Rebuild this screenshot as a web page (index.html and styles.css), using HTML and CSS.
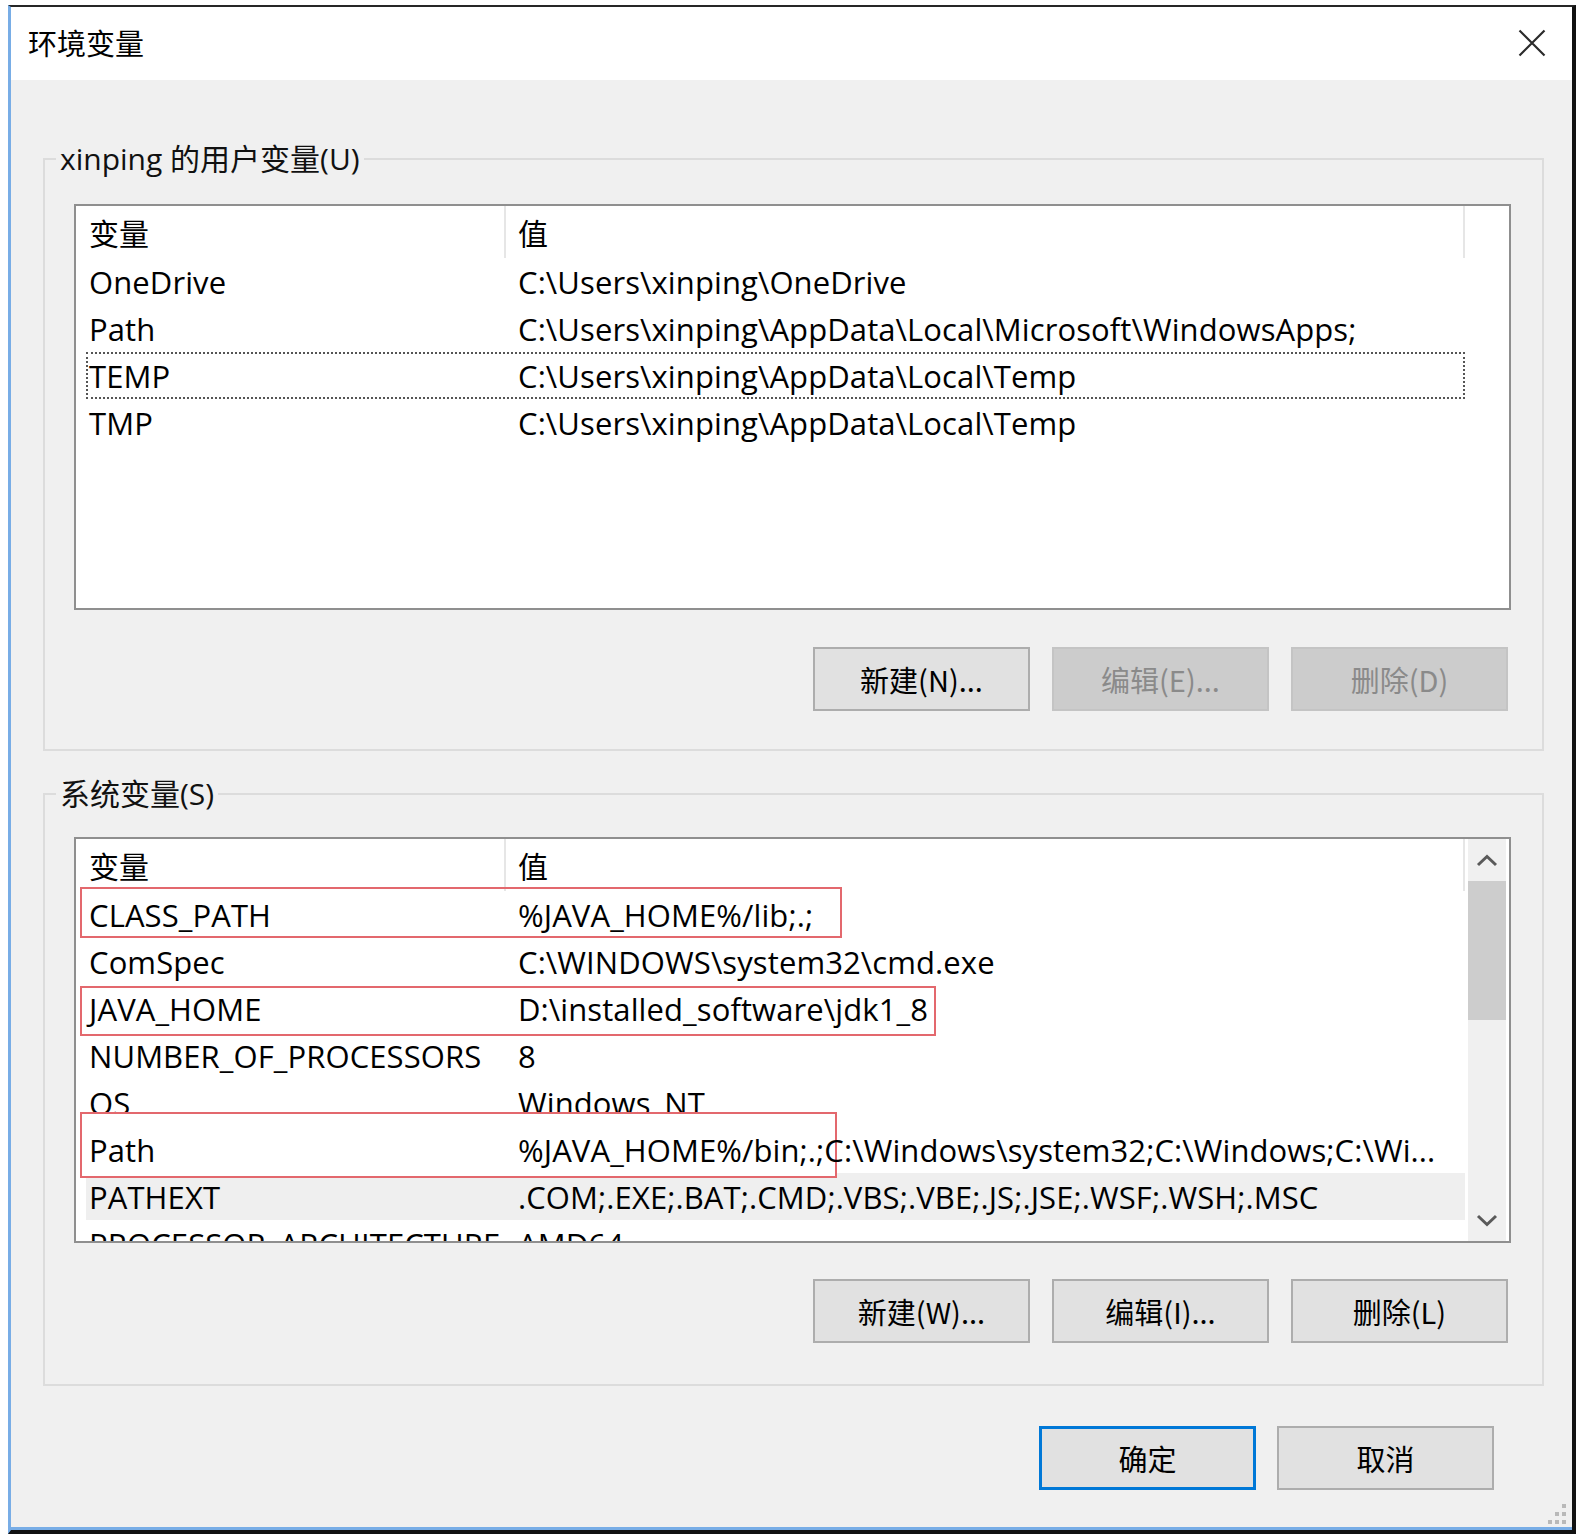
FILE: index.html
```html
<!DOCTYPE html>
<html lang="zh-CN">
<head>
  <meta charset="UTF-8" />
  <title>环境变量</title>
  <link rel="stylesheet" href="styles.css">
</head>
<body>
  <div class="window">
    <div class="titlebar">
      <span class="title">环境变量</span>
      <span class="close">
        <svg width="28" height="28" viewBox="0 0 28 28">
          <path d="M1.5 1.5 L26.5 26.5 M26.5 1.5 L1.5 26.5" stroke="#2b2b2b" stroke-width="2.2" fill="none"/>
        </svg>
      </span>
    </div>

    <div class="client">
      <!-- user variables -->
      <fieldset class="group group-user">
        <legend>xinping 的用户变量(U)</legend>
        <div class="list">
          <div class="list-body">
            <div class="list-head">
              <span class="col-name">变量</span>
              <span class="col-value">值</span>
            </div>
            <div class="row"><span class="col-name">OneDrive</span><span class="col-value">C:\Users\xinping\OneDrive</span></div>
            <div class="row"><span class="col-name">Path</span><span class="col-value">C:\Users\xinping\AppData\Local\Microsoft\WindowsApps;</span></div>
            <div class="row focused"><span class="col-name">TEMP</span><span class="col-value">C:\Users\xinping\AppData\Local\Temp</span></div>
            <div class="row"><span class="col-name">TMP</span><span class="col-value">C:\Users\xinping\AppData\Local\Temp</span></div>
          </div>
        </div>
        <div class="buttons">
          <button class="btn">新建(N)...</button>
          <button class="btn" disabled>编辑(E)...</button>
          <button class="btn" disabled>删除(D)</button>
        </div>
      </fieldset>

      <!-- system variables -->
      <fieldset class="group group-system">
        <legend>系统变量(S)</legend>
        <div class="list">
          <div class="list-body">
            <div class="list-head">
              <span class="col-name">变量</span>
              <span class="col-value">值</span>
            </div>
            <div class="row"><span class="mark mark-class"></span><span class="col-name">CLASS_PATH</span><span class="col-value">%JAVA_HOME%/lib;.;</span></div>
            <div class="row"><span class="col-name">ComSpec</span><span class="col-value">C:\WINDOWS\system32\cmd.exe</span></div>
            <div class="row"><span class="mark mark-java"></span><span class="col-name">JAVA_HOME</span><span class="col-value">D:\installed_software\jdk1_8</span></div>
            <div class="row"><span class="col-name">NUMBER_OF_PROCESSORS</span><span class="col-value">8</span></div>
            <div class="row"><span class="col-name">OS</span><span class="col-value">Windows_NT</span></div>
            <div class="row row-path"><span class="mark mark-path"></span><span class="col-name">Path</span><span class="col-value">%JAVA_HOME%/bin;.;C:\Windows\system32;C:\Windows;C:\Wi...</span></div>
            <div class="row selected"><span class="col-name">PATHEXT</span><span class="col-value">.COM;.EXE;.BAT;.CMD;.VBS;.VBE;.JS;.JSE;.WSF;.WSH;.MSC</span></div>
            <div class="row"><span class="col-name">PROCESSOR_ARCHITECTURE</span><span class="col-value">AMD64</span></div>
          </div>
          <div class="scrollbar">
            <span class="scroll-arrow">
              <svg width="22" height="13" viewBox="0 0 22 13"><polyline points="2,11 11,2.5 20,11" stroke="#5a5a5a" stroke-width="3" fill="none"/></svg>
            </span>
            <span class="scroll-thumb"></span>
            <span class="scroll-space"></span>
            <span class="scroll-arrow">
              <svg width="22" height="13" viewBox="0 0 22 13"><polyline points="2,2 11,10.5 20,2" stroke="#5a5a5a" stroke-width="3" fill="none"/></svg>
            </span>
          </div>
        </div>
        <div class="buttons">
          <button class="btn">新建(W)...</button>
          <button class="btn">编辑(I)...</button>
          <button class="btn">删除(L)</button>
        </div>
      </fieldset>

      <div class="dialog-buttons">
        <button class="btn btn-default">确定</button>
        <button class="btn">取消</button>
      </div>
    </div>

    <svg class="grip" width="24" height="24" viewBox="0 0 24 24">
      <rect x="18" y="2" width="4" height="4" fill="#b9b9b9"/>
      <rect x="11" y="10" width="4" height="4" fill="#b9b9b9"/>
      <rect x="18" y="10" width="4" height="4" fill="#b9b9b9"/>
      <rect x="4" y="18" width="4" height="4" fill="#b9b9b9"/>
      <rect x="11" y="18" width="4" height="4" fill="#b9b9b9"/>
      <rect x="18" y="18" width="4" height="4" fill="#b9b9b9"/>
    </svg>
  </div>
</body>
</html>
```

FILE: styles.css
```css
body {
  margin: 0;
  padding: 0;
  background: #fff;
  font-family: "Open Sans", "Noto Sans CJK SC", sans-serif;
  color: #000;
}

.window {
  position: relative;
  box-sizing: border-box;
  width: 1568px;
  height: 1529px;
  margin: 5px 0 0 8px;
  background: #f0f0f0;
  border-top: 2px solid #262626;
  border-left: 3px solid #78ade6;
  border-right: 4px solid #111;
  border-bottom: 4px solid #111;
  box-shadow: inset 0 -3px 0 #78ade6;
  display: flex;
  flex-direction: column;
}

.titlebar {
  height: 73px;
  background: #fff;
  display: flex;
  align-items: center;
  justify-content: space-between;
  padding: 0 26px 0 17px;
}

.title {
  font-family: "Noto Sans CJK SC", sans-serif;
  font-size: 29px;
  line-height: 40px;
  margin-top: -3px;
}

.close {
  display: flex;
  margin-top: -1px;
}

.client {
  flex: 1;
}

.group {
  margin: 59px 28px 0 32px;
  padding: 25px 31px 38px 29px;
  border: 2px solid #dcdcdc;
  min-width: 0;
}

.group-system {
  margin-top: 23px;
  padding-top: 23px;
  padding-bottom: 41px;
}

.group legend {
  margin-left: -18px;
  padding: 0 4px;
  font-size: 30px;
  line-height: 40px;
  color: #111;
}

.list {
  box-sizing: border-box;
  height: 406px;
  background: #fff;
  border: 2px solid #8f8f8f;
  display: flex;
  overflow: hidden;
  font-size: 31px;
  letter-spacing: 0.1px;
}

.list-body {
  box-sizing: border-box;
  width: 1389px;
  flex: none;
  padding-left: 10px;
  white-space: nowrap;
}

.list-head,
.row {
  display: flex;
  align-items: center;
}

.list-head {
  height: 52px;
  font-size: 30px;
  letter-spacing: 0;
}

.list-head .col-name,
.list-head .col-value {
  font-family: "Noto Sans CJK SC", sans-serif;
  height: 100%;
  display: flex;
  align-items: center;
}

.list-head .col-value {
  flex: 1;
  padding-left: 12px;
  border-left: 2px solid #e6e6e6;
  border-right: 2px solid #e6e6e6;
}

.row {
  position: relative;
  height: 47px;
}

.col-name {
  box-sizing: border-box;
  width: 418px;
  flex: none;
  padding-left: 3px;
}

.col-value {
  padding-left: 14px;
}

.row .col-name,
.row .col-value {
  position: relative;
  z-index: 1;
}

.row.focused {
  outline: 2px dotted #555;
  outline-offset: -2px;
}

.row.selected {
  background: #efefef;
}

/* hand drawn highlight boxes */
.mark {
  position: absolute;
  left: -6px;
  border: 2px solid #e3686d;
  box-sizing: border-box;
}

.mark-class {
  top: -4px;
  width: 762px;
  height: 51px;
}

.mark-java {
  top: 1px;
  width: 856px;
  height: 50px;
}

.row-path {
  z-index: 1;
}

.mark-path {
  top: -14px;
  width: 757px;
  height: 66px;
  background: #fff;
}

.scrollbar {
  width: 38px;
  flex: none;
  margin-left: 3px;
  background: #f0f0f0;
  display: flex;
  flex-direction: column;
}

.scroll-arrow {
  height: 42px;
  display: flex;
  align-items: center;
  justify-content: center;
}

.scroll-thumb {
  height: 139px;
  background: #cdcdcd;
}

.scroll-space {
  flex: 1;
}

.buttons {
  display: flex;
  justify-content: flex-end;
  gap: 22px;
  margin: 37px 3px 0 0;
}

.group-system .buttons {
  margin-top: 36px;
}

.btn {
  box-sizing: border-box;
  width: 217px;
  height: 64px;
  background: #e1e1e1;
  border: 2px solid #adadad;
  border-radius: 0;
  padding: 0;
  font-family: "Noto Sans CJK SC", sans-serif;
  font-size: 29px;
  color: #000;
}

.btn:disabled {
  background: #cccccc;
  border-color: #c4c4c4;
  color: #8a8a8a;
}

.btn-default {
  border: 3px solid #0078d7;
}

.dialog-buttons {
  display: flex;
  justify-content: flex-end;
  gap: 21px;
  margin: 40px 78px 0 0;
}

.grip {
  position: absolute;
  right: 4px;
  bottom: 4px;
}
```
